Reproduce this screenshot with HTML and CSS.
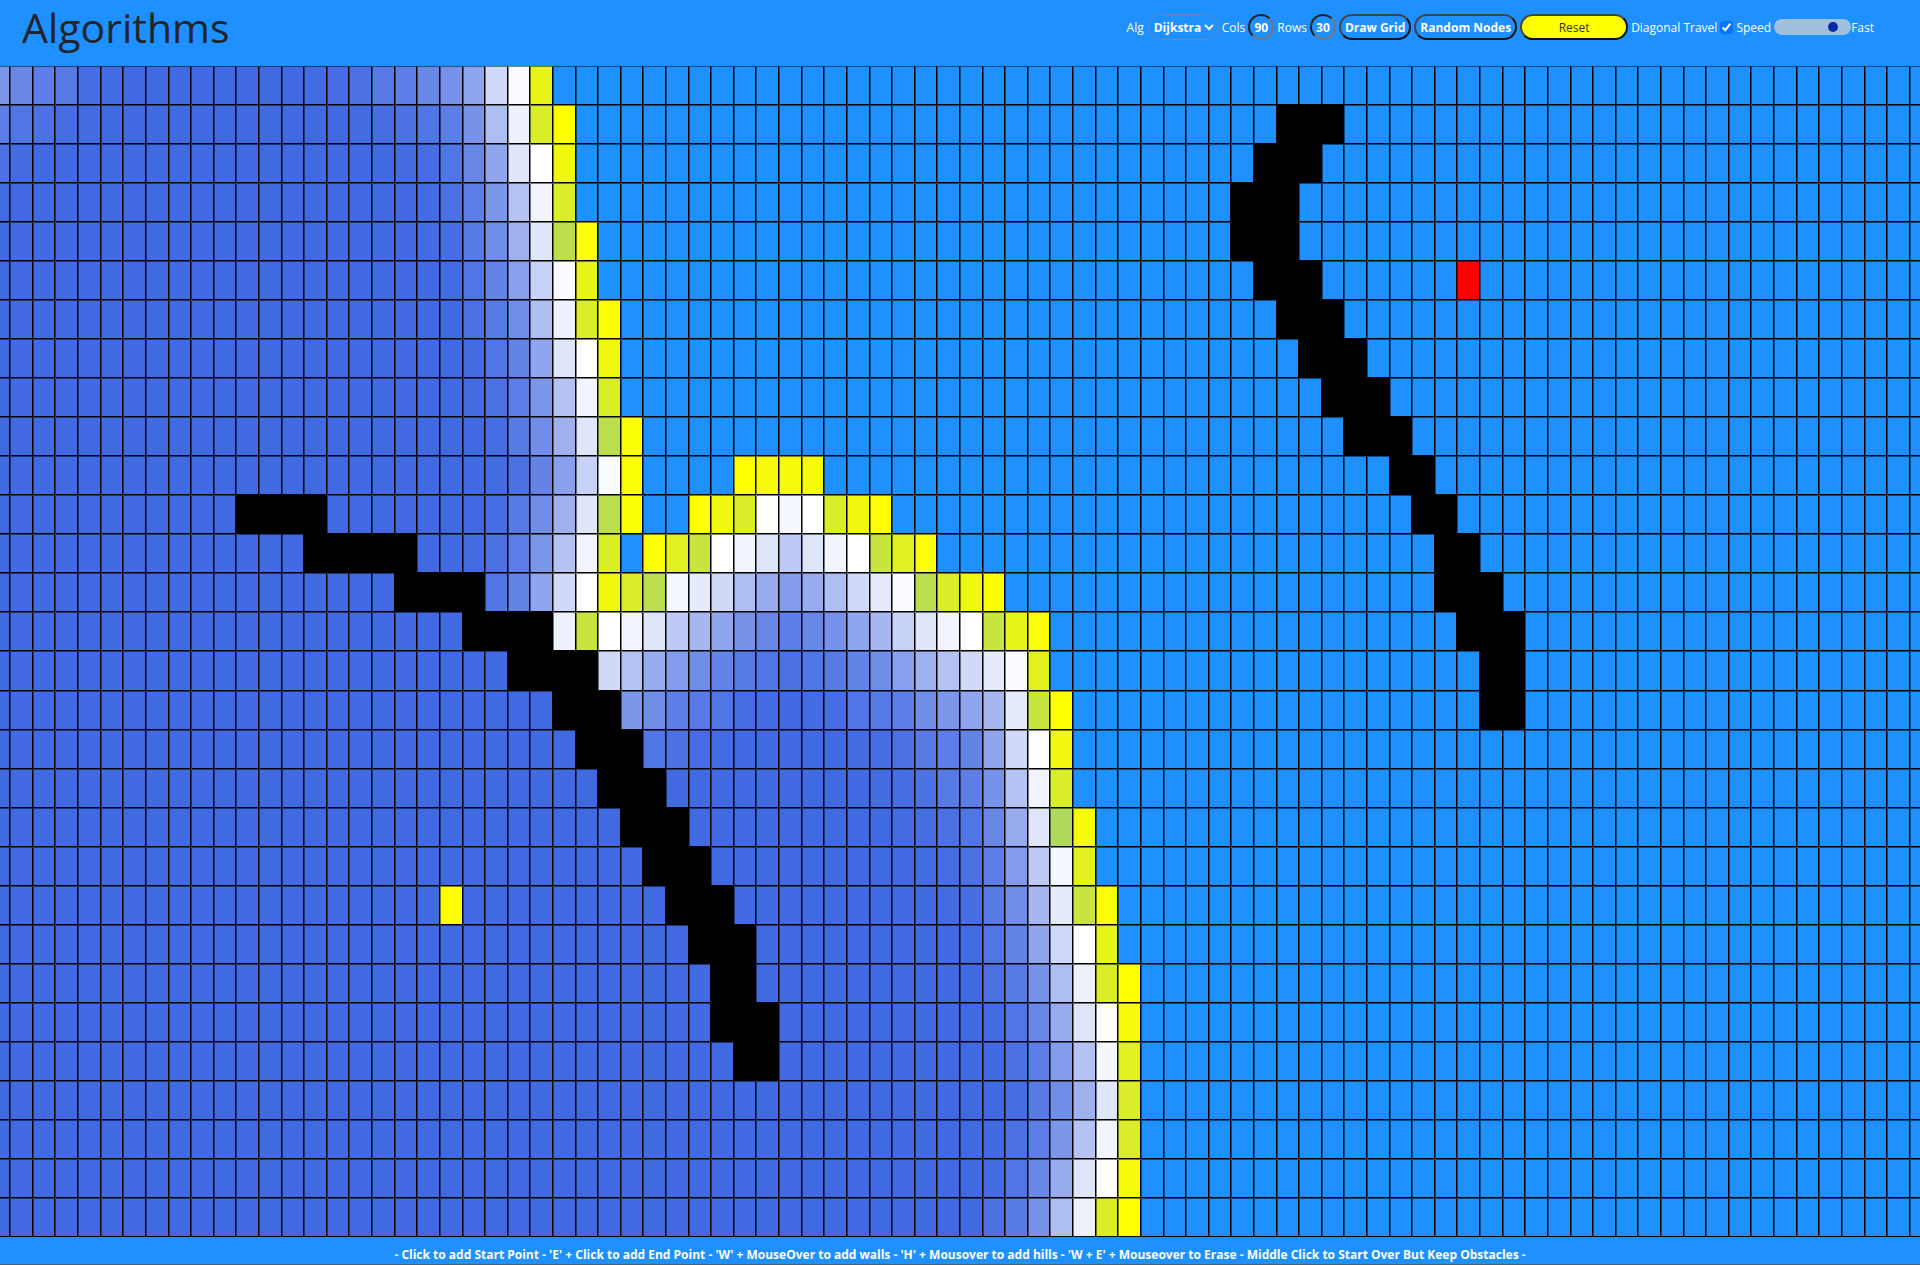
FILE: index.html
```html
<!DOCTYPE html>
<html lang="en">
<head>
<meta charset="UTF-8">
<meta name="viewport" content="width=device-width, initial-scale=1.0">
<title>Algorithms</title>
<link rel="stylesheet" href="styles.css">
</head>
<body>
<header class="navbar">
  <h1 class="title">Algorithms</h1>
  <form class="controls" id="controls">
    <label for="alg">Alg</label>
    <select class="pill alg" id="alg">
      <option>Dijkstra</option>
      <option>A*</option>
    </select>
    <label for="cols">Cols</label>
    <input class="pill size" id="cols" type="text" value="90">
    <label for="rows">Rows</label>
    <input class="pill size" id="rows" type="text" value="30">
    <button class="pill btn" type="button">Draw Grid</button>
    <button class="pill btn" type="button">Random Nodes</button>
    <button class="pill btn reset" type="button">Reset</button>
    <label for="diagonal">Diagonal Travel</label>
    <input class="check" id="diagonal" type="checkbox" checked>
    <label for="speed">Speed</label>
    <div class="speed">
      <input class="slider" id="speed" type="range" min="0" max="100" value="92">
      <span>Fast</span>
    </div>
  </form>
</header>

<main class="board">
  <div class="grid" id="grid"></div>
</main>

<footer class="help">- Click to add Start Point - 'E' + Click to add End Point - 'W' + MouseOver to add walls - 'H' + Mousover to add hills - 'W + E' + Mouseover to Erase - Middle Click to Start Over But Keep Obstacles -</footer>

<script src="grid.js"></script>
</body>
</html>
```

FILE: styles.css
```css
* {
  box-sizing: border-box;
}

body {
  margin: 0;
  min-height: 100vh;
  display: flex;
  flex-direction: column;
  overflow-x: hidden;
  background-color: dodgerblue;
  color: white;
  font-family: "Open Sans", "Noto Sans", sans-serif;
  font-size: 12px;
}

/* top bar */
.navbar {
  display: flex;
  justify-content: space-between;
  align-items: flex-start;
  height: 66px;
  padding: 0 46px 0 22px;
}

.title {
  margin: 0;
  font-size: 41px;
  font-weight: 400;
  line-height: 54px;
  color: #212529;
}

.controls {
  display: flex;
  align-items: center;
  gap: 3px;
  height: 54px;
}

.pill {
  height: 26px;
  border: 2px outset #555;
  border-radius: 13px;
  background-color: transparent;
  color: white;
  font-family: inherit;
  font-size: 12px;
  font-weight: 700;
}

.alg {
  width: 72px;
  padding: 0 0 0 6px;
  border: 1px solid #6488c0;
  appearance: none;
  background-image: url("data:image/svg+xml,%3Csvg xmlns='http://www.w3.org/2000/svg' width='10' height='7'%3E%3Cpath d='M1 1l4 4 4-4' fill='none' stroke='white' stroke-width='2'/%3E%3C/svg%3E");
  background-repeat: no-repeat;
  background-position: right 4px center;
}

.alg option {
  color: black;
}

.size {
  width: 26px;
  padding: 0;
  text-align: center;
  border: 2px inset #767676;
}

.btn {
  padding: 0 4px;
  border-color: #444 #111 #111 #444;
  border-style: solid;
}

.reset {
  width: 108px;
  background-color: yellow;
  color: #333300;
  font-weight: 400;
}

.check {
  width: 13px;
  height: 13px;
  margin: 0;
  accent-color: #0075ff;
}

.speed {
  display: flex;
  align-items: center;
}

.slider {
  appearance: none;
  width: 77px;
  height: 16px;
  margin: 0;
  padding: 0 9px;
  border-radius: 8px;
  background-color: #a0c0e0;
}

.slider::-webkit-slider-thumb {
  appearance: none;
  width: 10px;
  height: 10px;
  border-radius: 50%;
  background-color: #0828a8;
}

/* node grid, a little wider than the window */
.board {
  flex: 1;
  display: flex;
  overflow: hidden;
}

.grid {
  flex: none;
  display: grid;
  width: 106%;
  margin-left: -3%;
}

.node {
  border: 1px solid;
  border-color: rgba(0, 0, 0, 0.5) black black rgba(0, 0, 0, 0.5);
}

.wall {
  background-color: black;
}

.start {
  background-color: yellow;
}

.end {
  background-color: red;
}

/* key help */
.help {
  height: 28px;
  padding-top: 9px;
  border-bottom: 1px solid #44607c;
  line-height: 18px;
  text-align: center;
  font-weight: 700;
}
```

FILE: grid.js
```js
const COLS = 90;
const ROWS = 30;
const OFFSET = 2; // columns hidden past the left edge

// A-J: just discovered (yellow -> green), a-z and 1-4: visited (white -> royalblue)
const colors = {
  A: '#ffff00', B: '#fcff08', C: '#f6fb0b', D: '#f0f810', E: '#e8f518',
  F: '#e0f020', G: '#d9ee28', H: '#c7e43f', I: '#bcde4c', J: '#afd95a',
  a: '#ffffff', b: '#fbfcff', c: '#f6f8ff', d: '#f2f5ff', e: '#ecf1fc',
  f: '#e6ebfc', g: '#dfe6fa', h: '#d0d9f7', i: '#c7d3f6', j: '#bccaf5',
  k: '#b4c3f3', l: '#adbef3', m: '#a6b6f1', n: '#9eb0ee', o: '#97abee',
  p: '#8fa5ee', q: '#89a1ec', r: '#829bea', s: '#7b97ea', t: '#7692e9',
  u: '#708de8', v: '#6988e6', w: '#6384e6', x: '#5d7ee6', y: '#577ae5',
  z: '#5075e4', 1: '#4b71e3', 2: '#466de3', 3: '#436be2', 4: '#4169e1'
};

// first column of the wave front and the state of each node from there
const front = [
  [14, '321yxvtphbE'],
  [16, '321zxtleGA'],
  [18, '32zvpgaD'],
  [19, '31xskdG'],
  [19, '32yungIB'],
  [20, '3zwqibE'],
  [21, '1yuleGA'],
  [21, '3zwpgaD'],
  [21, '31xskdG'],
  [22, '2yungIB'],
  [22, '31wqibB....ACCC'],
  [22, '2yungIB..ADGacaGDA'],
  [21, '31xskdG.BFHadgjgdaHFB'],
  [22, 'zwphaDGIcfhlorolhfbIGDA'],
  [25, 'eHadgjmptvxvtpmigdaHEB'],
  [27, 'hkoruwyz1zywuqnkhfbF'],
  [28, 'suxyz23432zyxuspmfHA'],
  [29, 'z12344444321yxwphaD'],
  [39, '321yxtkdG'],
  [40, '321zvogJC'],
  [41, '321xrjcF'],
  [42, '32yumfHA'],
  [43, '3zwphaE'],
  [44, '1ytleGA'],
  [44, '3zvogaC'],
  [45, '1xrkcF'],
  [45, '2yungG'],
  [45, '1xskdG'],
  [44, '3zvogaC'],
  [44, '1ytleGA']
];

// [first, last] wall columns by row
const walls = {
  1: [[57, 59]],
  2: [[56, 58]],
  3: [[55, 57]],
  4: [[55, 57]],
  5: [[56, 58]],
  6: [[57, 59]],
  7: [[58, 60]],
  8: [[59, 61]],
  9: [[60, 62]],
  10: [[62, 63]],
  11: [[11, 14], [63, 64]],
  12: [[14, 18], [64, 65]],
  13: [[18, 21], [64, 66]],
  14: [[21, 24], [65, 67]],
  15: [[23, 26], [66, 67]],
  16: [[25, 27], [66, 67]],
  17: [[26, 28]],
  18: [[27, 29]],
  19: [[28, 30]],
  20: [[29, 31]],
  21: [[30, 32]],
  22: [[31, 33]],
  23: [[32, 33]],
  24: [[32, 34]],
  25: [[33, 34]]
};

// the wave is fading again in the top left corner
const corner = ['svxy23', 'xz123', '13', '3'];

function isWall(row, col) {
  return (walls[row] || []).some(([from, to]) => col >= from && col <= to);
}

function stateAt(row, col) {
  const [first, states] = front[row];
  if (corner[row] && corner[row][Math.max(col, 0)]) {
    return corner[row][Math.max(col, 0)];
  }
  if (col < first) {
    return '4';
  }
  return states[col - first] || '.';
}

function drawGrid() {
  const grid = document.getElementById('grid');
  grid.style.gridTemplateColumns = `repeat(${COLS}, 1fr)`;
  grid.style.gridTemplateRows = `repeat(${ROWS}, 1fr)`;

  for (let row = 0; row < ROWS; row++) {
    for (let i = 0; i < COLS; i++) {
      const col = i - OFFSET;
      const node = document.createElement('div');
      node.className = 'node';
      if (isWall(row, col)) {
        node.classList.add('wall');
      } else if (row === 21 && col === 20) {
        node.classList.add('start');
      } else if (row === 5 && col === 65) {
        node.classList.add('end');
      } else {
        node.style.backgroundColor = colors[stateAt(row, col)] || '';
      }
      grid.appendChild(node);
    }
  }
}

drawGrid();
```
